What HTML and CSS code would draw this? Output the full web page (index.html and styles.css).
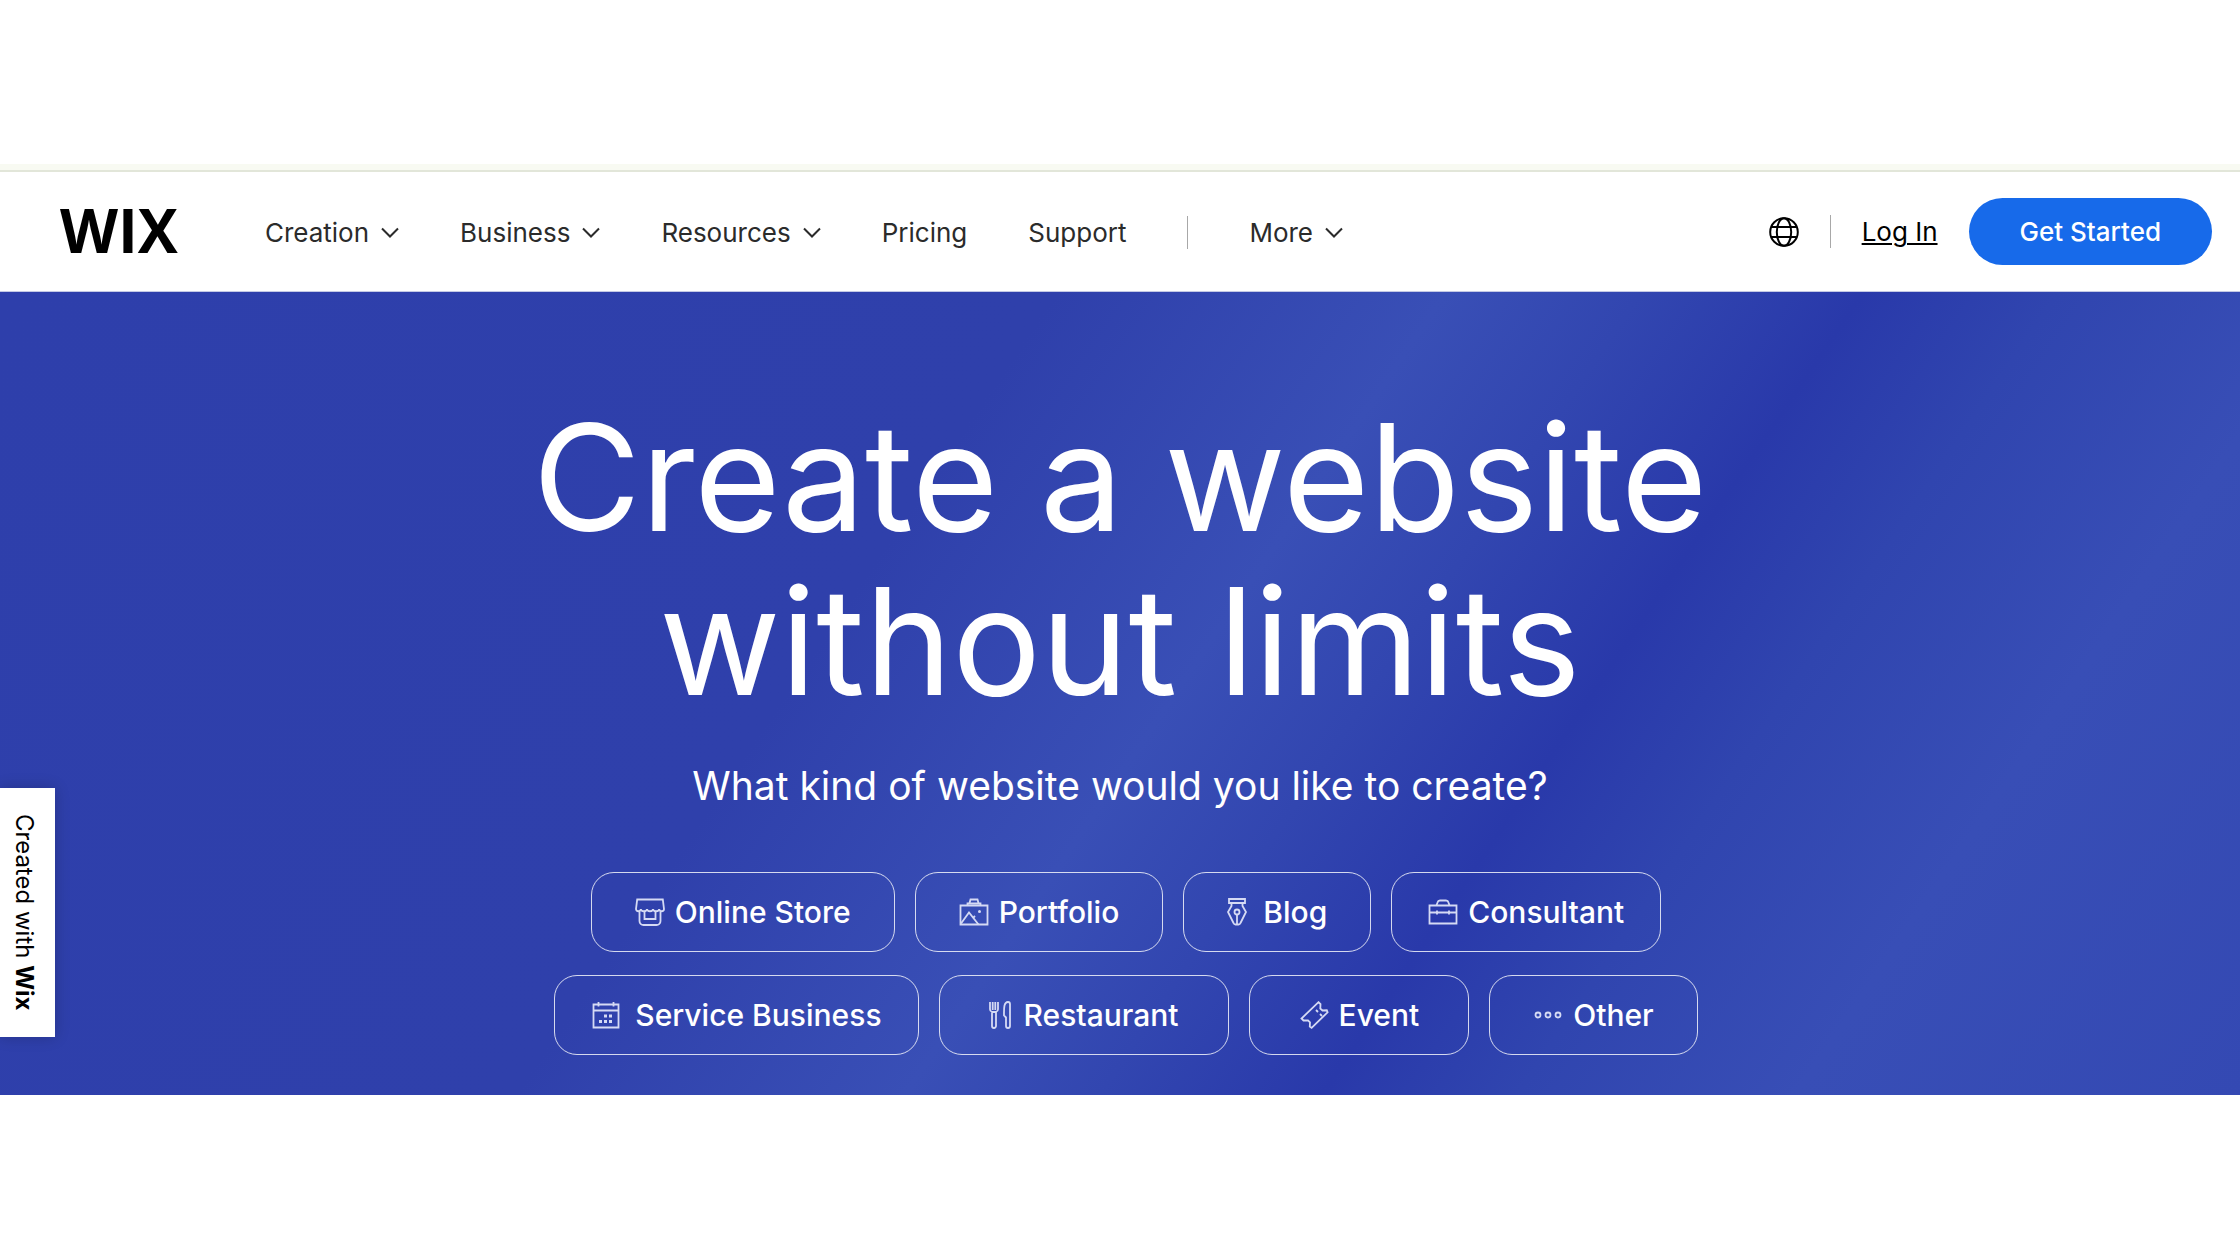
FILE: index.html
```
<!DOCTYPE html>
<html lang="en">
<head>
    <meta charset="UTF-8">
    <meta name="viewport" content="width=device-width, initial-scale=1.0">
    <title>Wix - Create a website without limits</title>
    <link rel="stylesheet" href="styles.css">
</head>
<body>

    <div class="top-strip"></div>

    <header class="header">
        <a class="logo" href="#">WIX</a>

        <nav class="nav">
            <button class="nav-item" type="button">Creation
                <svg class="chevron" viewBox="0 0 18 12"><path d="M1 1.5l8 8 8-8"/></svg>
            </button>
            <button class="nav-item" type="button">Business
                <svg class="chevron" viewBox="0 0 18 12"><path d="M1 1.5l8 8 8-8"/></svg>
            </button>
            <button class="nav-item" type="button">Resources
                <svg class="chevron" viewBox="0 0 18 12"><path d="M1 1.5l8 8 8-8"/></svg>
            </button>
            <a class="nav-item" href="#">Pricing</a>
            <a class="nav-item" href="#">Support</a>
            <span class="divider"></span>
            <button class="nav-item" type="button">More
                <svg class="chevron" viewBox="0 0 18 12"><path d="M1 1.5l8 8 8-8"/></svg>
            </button>
        </nav>

        <div class="actions">
            <button class="globe" type="button" aria-label="Language">
                <svg viewBox="0 0 30 30">
                    <circle cx="15" cy="15" r="13.8"/>
                    <ellipse cx="15" cy="15" rx="7.2" ry="13.8"/>
                    <path d="M2.2 10h25.6M2.2 20h25.6"/>
                </svg>
            </button>
            <span class="divider"></span>
            <a class="login" href="#">Log In</a>
            <a class="get-started" href="#">Get Started</a>
        </div>
    </header>

    <main class="hero">
        <h1 class="title">Create a website<br>without limits</h1>
        <p class="subtitle">What kind of website would you like to create?</p>

        <div class="chips">
            <div class="chip-row">
                <button class="chip" type="button">
                    <svg class="icon" viewBox="0 0 30 28">
                        <path d="M2.2 1.500h25.600l1.200 9.500c0 3-4.800 3-4.800 0 0 3-6.200 3-6.200 0 0 3-6 3-6 0 0 3-6.200 3-6.200 0 0 3-4.800 3-4.800 0z"/>
                        <path d="M4.500 13.500v9.500a4 4 0 0 0 4 4h13a4 4 0 0 0 4-4v-9.500"/>
                        <path d="M9.500 13.500v7.500h11v-7.500"/>
                    </svg>
                    Online Store
                </button>
                <button class="chip" type="button">
                    <svg class="icon" viewBox="0 0 30 28">
                        <path d="M1.500 7.500h27v19h-27z"/>
                        <path d="M8.500 7v-1.500h13v1.500M10.500 5l1-3.500h7l1 3.500"/>
                        <path d="M2 25.500l8-11 9.500 12M14.500 19.500l1.500-1.500"/>
                        <circle class="dot" cx="20.500" cy="13.500" r="1.500"/>
                    </svg>
                    Portfolio
                </button>
                <button class="chip" type="button">
                    <svg class="icon icon-narrow" viewBox="0 0 20 28">
                        <path d="M2 1h16v4h-16z"/>
                        <path d="M4.500 5v3l-3.500 6 5.500 11a2.500 2.500 0 0 0 2 1.500h3a2.500 2.500 0 0 0 2-1.500l5.500-11-3.500-6v-3"/>
                        <circle cx="10" cy="14" r="2.500"/>
                        <path d="M10 16.500v9.500"/>
                    </svg>
                    Blog
                </button>
                <button class="chip chip-slim" type="button">
                    <svg class="icon" viewBox="0 0 30 28">
                        <path d="M1.500 7.500h27v18h-27zM1.500 14.500h27"/>
                        <path d="M8.500 7.500l1-3q.5-2 2.500-2h6q2 0 2.500 2l1 3"/>
                        <path d="M9 12.500v4M21 12.500v4"/>
                    </svg>
                    Consultant
                </button>
            </div>
            <div class="chip-row">
                <button class="chip chip-slim" type="button">
                    <svg class="icon icon-spaced" viewBox="0 0 28 28">
                        <path d="M1.500 3.500h25v23h-25zM1.500 9.500h25M6.500 1v4.500M21.500 1v4.500"/>
                        <path class="dots" d="M12 15h3M17 15h3M7 20.500h3M12 20.500h3M17 20.500h3"/>
                    </svg>
                    Service Business
                </button>
                <button class="chip chip-wide" type="button">
                    <svg class="icon icon-fork" viewBox="0 0 22 28">
                        <path d="M1 1v7a3 3 0 0 0 2 3v14a2 2 0 0 0 4 0v-14a3 3 0 0 0 2-3v-7M3.700 1v8M6.300 1v8M3 11h4"/>
                        <path d="M17 16.500l-2-2c0-6-.5-13.500 4-13.500a2 2 0 0 1 2 2v22a2 2 0 0 1-4 0z"/>
                    </svg>
                    Restaurant
                </button>
                <button class="chip chip-wide" type="button">
                    <svg class="icon" viewBox="0 0 28 28">
                        <path d="M18.500 1.200l2 2-.2 4.300 2.200 2 4.300-.2.800 2-16 15.500-1.800-1.200.2-4.300-2-2-4.500.2-2-2z"/>
                        <path d="M16 9l2 2M20 13l2 2"/>
                    </svg>
                    Event
                </button>
                <button class="chip" type="button">
                    <svg class="icon" viewBox="0 0 28 28">
                        <circle cx="4" cy="14" r="2.500"/>
                        <circle cx="14" cy="14" r="2.500"/>
                        <circle cx="24" cy="14" r="2.500"/>
                    </svg>
                    Other
                </button>
            </div>
        </div>
    </main>

    <!-- Badge stuck to the left edge -->
    <a class="badge" href="#">Created with <b>Wix</b></a>

</body>
</html>
```
FILE: styles.css
```
/* Base styling */
* {
    box-sizing: border-box;
}

body {
    margin: 0;
    padding-top: 164px;
    background-color: #ffffff;
    color: #000000;
    font-family: Inter, "Liberation Sans", sans-serif;
    font-size: 26px;
    position: relative;
}

a {
    color: inherit;
    text-decoration: none;
}

button {
    border: none;
    background: none;
    padding: 0;
    color: inherit;
    font: inherit;
    cursor: pointer;
}

svg {
    display: block;
    fill: none;
    stroke: currentColor;
    stroke-width: 2;
}

.top-strip {
    height: 8px;
    background-color: #f8faf2;
    border-bottom: 2px solid #e2e6d9;
}

/* Header */
.header {
    display: flex;
    align-items: center;
    height: 120px;
    padding: 0 28px 0 60px;
    border-bottom: 1px solid #c4c9e4;
}

.logo {
    padding-bottom: 4px;
    margin-right: 87px;
    font-family: "Open Sans", sans-serif;
    font-size: 60px;
    font-weight: 700;
    line-height: 80px;
}

.nav {
    display: flex;
    align-items: center;
    gap: 61px;
    padding-top: 2px;
}

.nav-item {
    display: flex;
    align-items: center;
    gap: 12px;
    color: #2b2b2b;
    line-height: 32px;
}

.chevron {
    width: 18px;
    height: 12px;
}

.divider {
    width: 1px;
    height: 33px;
    background-color: #a8a8a8;
}

.actions {
    display: flex;
    align-items: center;
    gap: 31px;
    margin-left: auto;
}

.globe svg {
    width: 30px;
    height: 30px;
}

.login {
    text-decoration: underline;
    text-decoration-thickness: 2px;
    text-underline-offset: 2px;
}

.get-started {
    padding: 0 51px;
    border-radius: 34px;
    background-color: #176aea;
    color: #ffffff;
    font-weight: 500;
    line-height: 67px;
}

/* Hero */
.hero {
    padding: 104px 20px 40px;
    background: linear-gradient(124deg, #2e3fab 0%, #2f40ab 38%, #394fb6 52%, #3246b0 59%, #2939aa 67%, #3045af 74%, #384eb6 84%, #3449b3 100%);
    color: #ffffff;
    text-align: center;
}

.title {
    margin: 0;
    font-size: 148px;
    font-weight: 400;
    line-height: 164px;
}

.subtitle {
    margin: 38px 0 62px;
    font-size: 39px;
    line-height: 48px;
}

.chips {
    display: flex;
    flex-direction: column;
    gap: 23px;
    padding-left: 12px;
}

.chip-row {
    display: flex;
    flex-wrap: wrap;
    justify-content: center;
    gap: 20px;
}

.chip {
    display: flex;
    align-items: center;
    gap: 10px;
    height: 80px;
    padding: 0 43px;
    border: 1px solid rgba(255, 255, 255, 0.8);
    border-radius: 23px;
    font-size: 30px;
    font-weight: 500;
}

.chip-slim {
    padding: 0 36px;
}

.chip-wide {
    padding: 0 49px;
}

.icon {
    width: 30px;
    height: 28px;
    stroke: #d5daf4;
    stroke-width: 1.8;
}

.icon-narrow {
    width: 20px;
    margin-right: 6px;
}

.icon-fork {
    width: 22px;
    margin-right: 3px;
}

.icon-spaced {
    margin-right: 4px;
}

.dots {
    stroke-width: 3;
}

.dot {
    fill: #d5daf4;
    stroke: none;
}

/* Left edge badge */
.badge {
    position: absolute;
    top: 788px;
    left: 0;
    padding: 26px 11px 26px 4px;
    background-color: #ffffff;
    box-shadow: 0 0 14px rgba(0, 0, 0, 0.2);
    font-size: 24px;
    line-height: 40px;
    writing-mode: vertical-rl;
}
```
